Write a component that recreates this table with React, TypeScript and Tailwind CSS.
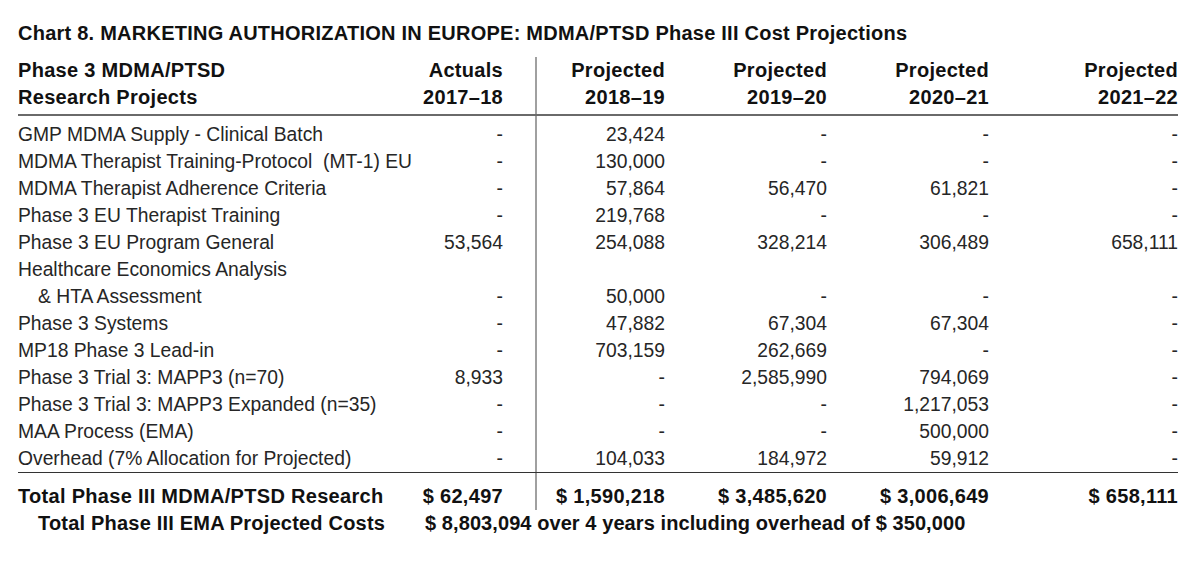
import React from "react";

type Row = { label: string; indent?: boolean; v: string[] };

const rows: Row[] = [
  { label: "GMP MDMA Supply - Clinical Batch", v: ["-", "23,424", "-", "-", "-"] },
  { label: "MDMA Therapist Training-Protocol  (MT-1) EU", v: ["-", "130,000", "-", "-", "-"] },
  { label: "MDMA Therapist Adherence Criteria", v: ["-", "57,864", "56,470", "61,821", "-"] },
  { label: "Phase 3 EU Therapist Training", v: ["-", "219,768", "-", "-", "-"] },
  { label: "Phase 3 EU Program General", v: ["53,564", "254,088", "328,214", "306,489", "658,111"] },
  { label: "Healthcare Economics Analysis", v: ["", "", "", "", ""] },
  { label: "& HTA Assessment", indent: true, v: ["-", "50,000", "-", "-", "-"] },
  { label: "Phase 3 Systems", v: ["-", "47,882", "67,304", "67,304", "-"] },
  { label: "MP18 Phase 3 Lead-in", v: ["-", "703,159", "262,669", "-", "-"] },
  { label: "Phase 3 Trial 3: MAPP3 (n=70)", v: ["8,933", "-", "2,585,990", "794,069", "-"] },
  { label: "Phase 3 Trial 3: MAPP3 Expanded (n=35)", v: ["-", "-", "-", "1,217,053", "-"] },
  { label: "MAA Process (EMA)", v: ["-", "-", "-", "500,000", "-"] },
  { label: "Overhead (7% Allocation for Projected)", v: ["-", "104,033", "184,972", "59,912", "-"] },
];

const grid = "grid grid-cols-[402px_115px_130px_162px_162px_189px]";
const font = { fontFamily: '"Liberation Sans", Arial, Helvetica, sans-serif' };
const bold = "text-[20px] leading-[27px] font-bold text-[#111] tracking-[0.3px]";

export default function App() {
  return (
    <div className="w-[1200px] h-[563px] bg-white overflow-hidden pl-[18px] pt-[20px]" style={font}>
      <div className={`${bold} whitespace-nowrap tracking-[0.24px]`}>
        Chart 8. MARKETING AUTHORIZATION IN EUROPE: MDMA/PTSD Phase III Cost Projections
      </div>

      <div className="w-[1160px] mt-[10px]">
        {/* Header */}
        <div className={`${grid} ${bold} border-b-2 border-[#6a6a6a] pb-[3px]`}>
          <div className="whitespace-nowrap">
            <div>Phase 3 MDMA/PTSD</div>
            <div>Research Projects</div>
          </div>
          <div className="text-right pr-[32px]">
            <div>Actuals</div>
            <div>2017–18</div>
          </div>
          <div className="text-right border-l-2 border-[#a0a0a0] pt-[3px] -mb-[3px]">
            <div className="-mt-[3px]">Projected</div>
            <div>2018–19</div>
          </div>
          <div className="text-right">
            <div>Projected</div>
            <div>2019–20</div>
          </div>
          <div className="text-right">
            <div>Projected</div>
            <div>2020–21</div>
          </div>
          <div className="text-right">
            <div>Projected</div>
            <div>2021–22</div>
          </div>
        </div>

        {/* Data */}
        <div className="border-b border-[#333] text-[19.3px] leading-[27px] text-[#262626]">
          {rows.map((r, i) => (
            <div key={i} className={grid}>
              <div className={`${i === 0 ? "pt-[5px]" : ""} ${r.indent ? "pl-[20px]" : ""} whitespace-pre`}>
                {r.label}
              </div>
              <div className={`${i === 0 ? "pt-[5px]" : ""} text-right pr-[32px]`}>{r.v[0]}</div>
              <div className={`${i === 0 ? "pt-[5px]" : ""} text-right border-l-2 border-[#a0a0a0]`}>{r.v[1]}</div>
              <div className={`${i === 0 ? "pt-[5px]" : ""} text-right`}>{r.v[2]}</div>
              <div className={`${i === 0 ? "pt-[5px]" : ""} text-right`}>{r.v[3]}</div>
              <div className={`${i === 0 ? "pt-[5px]" : ""} text-right`}>{r.v[4]}</div>
            </div>
          ))}
        </div>

        {/* Totals */}
        <div className={`${grid} ${bold}`}>
          <div className="pt-[10px] whitespace-nowrap">Total Phase III MDMA/PTSD Research</div>
          <div className="pt-[10px] pr-[32px] text-right whitespace-nowrap">$ 62,497</div>
          <div className="pt-[10px] text-right border-l-2 border-[#a0a0a0] whitespace-nowrap">$ 1,590,218</div>
          <div className="pt-[10px] text-right whitespace-nowrap">$ 3,485,620</div>
          <div className="pt-[10px] text-right whitespace-nowrap">$ 3,006,649</div>
          <div className="pt-[10px] text-right whitespace-nowrap">$ 658,111</div>
        </div>
        <div className={`${grid} ${bold}`}>
          <div className="pl-[20px] whitespace-nowrap tracking-[0.2px]">Total Phase III EMA Projected Costs</div>
          <div className="col-span-5 pl-[5px] whitespace-nowrap tracking-[0.08px]">
            $ 8,803,094 over 4 years including overhead of $ 350,000
          </div>
        </div>
      </div>
    </div>
  );
}
